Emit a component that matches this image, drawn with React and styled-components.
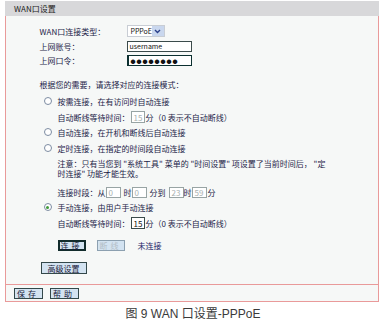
import React from "react";
import styled, { createGlobalStyle } from "styled-components";

const GlobalStyle = createGlobalStyle`
  * {
    margin: 0;
    padding: 0;
    box-sizing: border-box;
  }
  body {
    background: #fff;
    width: 386px;
    height: 323px;
    overflow: hidden;
    font-family: "Noto Sans CJK SC", "Liberation Sans", sans-serif;
    font-size: 8px;
    color: #1c1c48;
  }
`;

const Frame = styled.div`
  margin: 1px 0 0 5px;
  width: 374px;
`;

const TitleBar = styled.div`
  height: 15px;
  background: #d8d8da;
  padding-left: 9px;
  display: flex;
  align-items: center;
  color: #222;
`;

const Body = styled.div`
  height: 268px;
  background: #f6f8f7;
  border-left: 1.5px solid #e99a9a;
  border-right: 1.5px solid #e99a9a;
  padding: 8px 0 0 33.5px;
  display: flex;
  flex-direction: column;
`;

const Row = styled.div`
  display: flex;
  align-items: center;
  height: ${(p) => p.$h || 14}px;
  margin-top: ${(p) => p.$top || 0}px;
  padding-left: ${(p) => p.$indent || 0}px;
  white-space: nowrap;
`;

const Label = styled.span`
  width: 87px;
  flex-shrink: 0;
`;

const FakeSelect = styled.div`
  width: 38px;
  height: 12px;
  background: #fff;
  border: 1px solid #c8cdd4;
  display: flex;
  align-items: center;
  justify-content: space-between;
  padding-left: 3px;
  font-size: 7px;
  color: #111;
`;

const ArrowBox = styled.div`
  width: 12px;
  height: 10px;
  background: #c9d7ee;
  display: flex;
  align-items: center;
  justify-content: center;
`;

const TextBox = styled.div`
  width: ${(p) => p.$w}px;
  height: ${(p) => p.$hgt || 11}px;
  background: #fff;
  border: 1px solid ${(p) => (p.$dim ? "#98a4a4" : p.$focus ? "#0c3030" : "#3b4b4b")};
  border-left-width: ${(p) => (p.$focus ? 2 : 1)}px;
  display: flex;
  align-items: center;
  padding-left: 2px;
  font-size: ${(p) => p.$fs || 7}px;
  color: ${(p) => (p.$dim ? "#a8b0b0" : "#111")};
  margin: 0 ${(p) => p.$mr || 0}px 0 ${(p) => p.$ml || 0}px;
  letter-spacing: ${(p) => p.$ls || 0}px;
  overflow: hidden;
`;

const Radio = styled.span`
  width: 8px;
  height: 8px;
  border-radius: 50%;
  border: 1px solid #7d8ca2;
  background: #fff;
  margin-right: 6px;
  display: flex;
  align-items: center;
  justify-content: center;
  &::after {
    content: "";
    width: 3px;
    height: 3px;
    border-radius: 50%;
    background: ${(p) => (p.$on ? "#3f9a3a" : "transparent")};
  }
`;

const Note = styled.div`
  margin-top: 4px;
  padding-left: 18px;
  line-height: 10px;
  white-space: nowrap;
`;

const Btn = styled.div`
  height: ${(p) => p.$hgt || 11}px;
  width: ${(p) => p.$w}px;
  background: #d3e3f1;
  border: ${(p) => (p.$focus ? "2px solid #122c2c" : p.$off ? "1px solid #8ca0b0" : "1px solid #33484a")};
  display: flex;
  align-items: center;
  justify-content: center;
  letter-spacing: ${(p) => p.$ls || 0}px;
  color: ${(p) => (p.$off ? "#b4bec6" : "#1a1a3a")};
  margin-right: ${(p) => p.$mr || 0}px;
  font-size: 8px;
`;

const Status = styled.span`
  color: #1e1e68;
`;

const Footer = styled.div`
  height: 18px;
  background: #f6f8f7;
  border: 1.5px solid #e99a9a;
  display: flex;
  align-items: center;
  gap: 7px;
  padding-left: 7.5px;
`;

const Caption = styled.div`
  margin-top: 5px;
  text-align: center;
  font-family: "Liberation Sans", "Noto Sans CJK SC", sans-serif;
  font-size: 12px;
  line-height: 14px;
  color: #3a3a3a;
`;

function Chevron() {
  return (
    <svg width="7" height="5" viewBox="0 0 7 5">
      <path d="M1 1 L3.5 3.5 L6 1" fill="none" stroke="#2a3f8a" strokeWidth="1.4" />
    </svg>
  );
}

function App() {
  return (
    <React.Fragment>
      <GlobalStyle />
      <Frame>
        <TitleBar>WAN口设置</TitleBar>
        <Body>
          <Row>
            <Label>WAN口连接类型：</Label>
            <FakeSelect>
              PPPoE
              <ArrowBox>
                <Chevron />
              </ArrowBox>
            </FakeSelect>
          </Row>
          <Row $top={1}>
            <Label>上网账号：</Label>
            <TextBox $w={65}>username</TextBox>
          </Row>
          <Row>
            <Label>上网口令：</Label>
            <TextBox $w={65} $focus $fs={5} $ls={1}>
              ●●●●●●●●
            </TextBox>
          </Row>
          <Row $top={10}>根据您的需要，请选择对应的连接模式：</Row>
          <Row $top={3} $indent={4}>
            <Radio />
            按需连接，在有访问时自动连接
          </Row>
          <Row $top={2} $indent={18}>
            自动断线等待时间：
            <TextBox $w={14} $hgt={12} $dim $ml={1} $mr={1} $fs={8}>
              15
            </TextBox>
            分（0 表示不自动断线）
          </Row>
          <Row $top={1} $indent={4}>
            <Radio />
            自动连接，在开机和断线后自动连接
          </Row>
          <Row $top={2} $indent={4}>
            <Radio />
            定时连接，在指定的时间段自动连接
          </Row>
          <Note>
            注意：只有当您到 "系统工具" 菜单的 "时间设置" 项设置了当前时间后， "定
            <br />
            时连接" 功能才能生效。
          </Note>
          <Row $top={6} $indent={18}>
            连接时段：从
            <TextBox $w={15} $dim $mr={3} $fs={8}>0</TextBox>
            时
            <TextBox $w={15} $dim $mr={3} $fs={8}>0</TextBox>
            分到
            <TextBox $w={15} $dim $ml={3} $fs={8}>23</TextBox>
            时
            <TextBox $w={15} $dim $mr={1} $fs={8}>59</TextBox>
            分
          </Row>
          <Row $top={1} $indent={4}>
            <Radio $on />
            手动连接，由用户手动连接
          </Row>
          <Row $top={2} $indent={18}>
            自动断线等待时间：
            <TextBox $w={14} $hgt={12} $ml={1} $mr={1} $fs={8}>
              15
            </TextBox>
            分（0 表示不自动断线）
          </Row>
          <Row $top={8} $indent={18}>
            <Btn $w={28} $focus $ls={3} $mr={11}>
              连接
            </Btn>
            <Btn $w={28} $off $ls={3} $mr={13}>
              断线
            </Btn>
            <Status>未连接</Status>
          </Row>
          <Row $top={9} $indent={1}>
            <Btn $w={46} $hgt={12}>
              高级设置
            </Btn>
          </Row>
        </Body>
        <Footer>
          <Btn $w={29} $ls={3}>
            保存
          </Btn>
          <Btn $w={29} $ls={3}>
            帮助
          </Btn>
        </Footer>
      </Frame>
      <Caption>图 9 WAN 口设置-PPPoE</Caption>
    </React.Fragment>
  );
}

export default App;
